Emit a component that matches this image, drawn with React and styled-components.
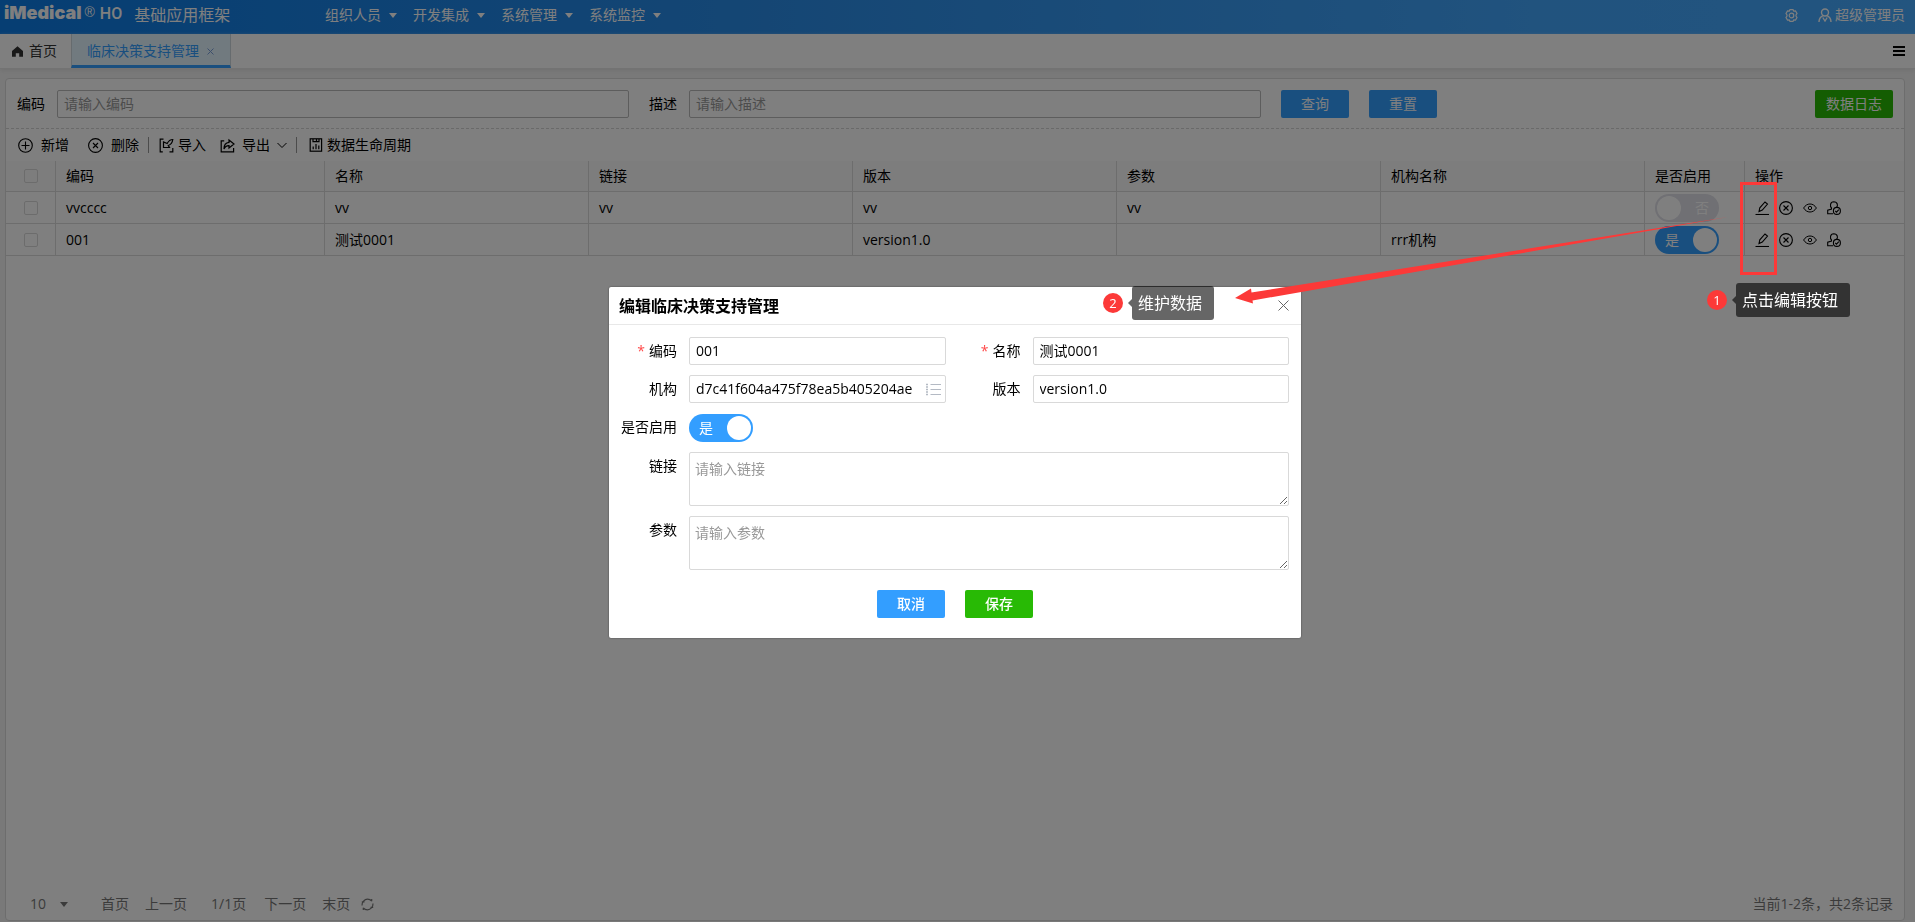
import React, { useState } from "react";
import styled, { createGlobalStyle, css } from "styled-components";

const blue = "#339eff";
const green = "#28ba05";
const line = "#dadada";
const red = "#fc3938";

const GlobalStyle = createGlobalStyle`
  *, *::before, *::after { box-sizing: border-box; }
  body { margin: 0; background: #f3f3f3; }
  body, button, input, textarea, select {
    font-family: "Open Sans", "Noto Sans CJK SC", sans-serif;
    font-size: 14px;
    line-height: 20px;
    color: #000;
  }
  button { border: 0; padding: 0; background: none; cursor: pointer; }
  a { color: inherit; text-decoration: none; }
  svg { display: block; flex: none; }
`;

const Page = styled.div`
  min-height: 100vh;
  display: flex;
  flex-direction: column;
`;

/* ---------- header ---------- */

const Header = styled.header`
  height: 34px;
  padding: 0 10px 4px 4px;
  display: flex;
  align-items: center;
  color: #fff;
  background: linear-gradient(90deg, #0c7ce6 0%, #2a8de9 40%, #42a6fd 80%, #46aaff 100%);
`;

const Brand = styled.div`
  width: 321px;
  display: flex;
  align-items: center;
`;

const LogoText = styled.span`
  font-family: Inter, sans-serif;
  font-size: 18px;
  font-weight: 900;
  line-height: 24px;
  margin-bottom: 4px;
`;

const LogoMark = styled.span`
  font-family: "Liberation Sans", sans-serif;
  font-size: 14px;
  line-height: 20px;
  margin: 0 5px 6px 3px;
`;

const LogoSuffix = styled.span`
  font-family: Roboto, sans-serif;
  font-size: 16px;
  font-weight: 500;
  margin: 0 12px 2px 0;
`;

const ProductName = styled.span`
  font-size: 16px;
  white-space: nowrap;
`;

const Nav = styled.nav`
  flex: 1;
  display: flex;
  gap: 16px;
`;

const NavItem = styled.button`
  display: flex;
  align-items: center;
  gap: 8px;
  color: #fff;
  white-space: nowrap;
`;

const Caret = styled.span`
  border: 4px solid transparent;
  border-top: 5px solid currentColor;
  border-bottom: 0;
`;

const HeaderTool = styled.button`
  display: flex;
  align-items: center;
  gap: 3px;
  margin-left: 20px;
  color: #fff;
`;

/* ---------- tab strip ---------- */

const TabStrip = styled.div`
  height: 35px;
  display: flex;
  background: #fff;
  border-bottom: 1px solid #e6e6e6;
  box-shadow: 0 2px 4px #e4e4e4;
`;

const HomeTab = styled.button`
  display: flex;
  align-items: center;
  gap: 6px;
  padding: 0 14px 0 12px;
  color: #333;
`;

const ActiveTab = styled.div`
  display: flex;
  align-items: center;
  gap: 8px;
  padding: 3px 16px 0 15px;
  color: ${blue};
  background: #e3f5ff;
  border: 1px solid #ccd6dc;
  border-width: 0 1px 3px;
  border-bottom-color: ${blue};
`;

const CloseButton = styled.button`
  color: ${(p) => p.$color};
`;

const MenuButton = styled.button`
  margin-left: auto;
  padding: 0 10px;
`;

/* ---------- panel ---------- */

const Panel = styled.main`
  flex: 1;
  display: flex;
  flex-direction: column;
  margin: 9px 10px 1px 5px;
  background: #fff;
  border: 1px solid ${line};
  border-radius: 4px;
`;

const SearchForm = styled.form`
  display: flex;
  align-items: center;
  padding: 11px 11px 10px 11px;
  border-bottom: 1px dashed #d5d5d5;
`;

const SearchLabel = styled.label`
  margin-right: 12px;
  white-space: nowrap;
`;

const control = css`
  width: 100%;
  min-width: 0;
  padding: 0 6px 2px;
  background: #fff;
  border: 1px solid ${(p) => p.$edge || "#d9d9d9"};
  border-radius: 2px;
  outline: 0;
  &::placeholder { color: #999; opacity: 1; }
`;

const TextBox = styled.input`
  ${control}
  height: 28px;
  padding-right: ${(p) => (p.$icon ? 30 : 6)}px;
`;

const SearchBox = styled(TextBox)`
  flex: 0 1 572px;
  margin-right: 20px;
`;

const Button = styled.button`
  flex: none;
  width: ${(p) => (p.$wide ? 78 : 68)}px;
  height: 28px;
  border-radius: 2px;
  color: #fff;
  font-weight: ${(p) => (p.$strong ? 500 : 400)};
  background: ${(p) => (p.$green ? green : blue)};
`;

const SearchButtons = styled.div`
  flex: 1;
  display: flex;
  gap: 20px;
  button:last-child { margin-left: auto; }
`;

const Toolbar = styled.div`
  height: 32px;
  display: flex;
  align-items: center;
  padding-left: 12px;
`;

const ToolButton = styled.button`
  display: flex;
  align-items: center;
  gap: ${(p) => p.$gap}px;
  margin-left: ${(p) => p.$before || 0}px;
  white-space: nowrap;
`;

const Divider = styled.span`
  width: 1px;
  height: 16px;
  margin: 0 ${(p) => p.$after}px 0 9px;
  background: #999;
`;

/* ---------- table ---------- */

const Table = styled.table`
  width: 100%;
  table-layout: fixed;
  border-collapse: separate;
  border-spacing: 0;
  th, td {
    height: 32px;
    padding: 0 10px;
    text-align: left;
    font-weight: 400;
    border-bottom: 1px solid ${line};
    border-right: 1px solid ${line};
    overflow: hidden;
    white-space: nowrap;
  }
  th { height: 31px; background: #fafafa; }
  th:last-child, td:last-child { border-right: 0; }
`;

const Col = styled.col`
  width: ${(p) => p.$width}px;
`;

const Tick = styled.input`
  appearance: none;
  display: block;
  width: 14px;
  height: 14px;
  margin: 0 auto;
  border: 1px solid #d9d9d9;
  border-radius: 2px;
  &:checked { background: ${blue}; border-color: ${blue}; }
`;

const SwitchLabel = styled.label`
  display: flex;
  align-items: center;
  justify-content: space-between;
  flex-direction: ${(p) => (p.$on ? "row" : "row-reverse")};
  width: 64px;
  height: 28px;
  padding: ${(p) => (p.$on ? "0 2px 0 10px" : "0 10px 0 2px")};
  border-radius: 14px;
  color: #fff;
  background: ${(p) => (p.$on ? blue : "#e0e0e8")};
  input { appearance: none; width: 0; height: 0; margin: 0; position: absolute; }
`;

const Knob = styled.span`
  width: 24px;
  height: 24px;
  border-radius: 50%;
  background: #fff;
`;

const Actions = styled.div`
  display: flex;
  gap: 10px;
`;

const Pager = styled.footer`
  margin-top: auto;
  display: flex;
  align-items: center;
  height: 32px;
  padding: 0 11px 0 24px;
  color: #777;
`;

const PageSize = styled.div`
  display: flex;
  align-items: center;
  gap: 14px;
  margin-right: 33px;
  select {
    appearance: none;
    border: 0;
    padding: 0;
    width: 16px;
    background: none;
    color: inherit;
  }
`;

const PageLink = styled.a`
  margin-right: ${(p) => p.$after || 16}px;
  color: #777;
`;

const Summary = styled.span`
  margin-left: auto;
`;

/* ---------- dialog ---------- */

const Mask = styled.div`
  position: fixed;
  inset: 0;
  display: flex;
  align-items: center;
  justify-content: center;
  padding: 3px 5px 0 0;
  background: rgba(0, 0, 0, 0.5);
`;

const Dialog = styled.section`
  position: relative;
  width: 692px;
  background: #fff;
  border-radius: 2px;
  box-shadow: 0 0 2px rgba(0, 0, 0, 0.5);
`;

const DialogHead = styled.div`
  display: flex;
  align-items: center;
  justify-content: space-between;
  height: 38px;
  padding: 0 12px 0 10px;
  border-bottom: 1px solid #e8e8e8;
`;

const DialogTitle = styled.h2`
  margin: 0;
  font-size: 16px;
  font-weight: 600;
`;

const Form = styled.form`
  display: grid;
  grid-template-columns: 68px 1fr 63px 1fr;
  column-gap: 12px;
  row-gap: 10px;
  padding: 12px 12px 20px 0;
`;

const FieldLabel = styled.label`
  text-align: right;
  line-height: 28px;
  height: 28px;
  white-space: nowrap;
`;

const Star = styled.span`
  margin-right: 4px;
  color: #ff4a4a;
`;

const Field = styled.div`
  position: relative;
  display: flex;
  grid-column: ${(p) => (p.$full ? "2 / -1" : "auto")};
`;

const SwitchField = styled(Field)`
  padding-top: 1px;
`;

const LookupButton = styled.button`
  position: absolute;
  right: 5px;
  top: 7px;
  color: #b4bac4;
`;

const TextArea = styled.textarea`
  ${control}
  height: 54px;
  padding: 6px 5px 0;
  resize: vertical;
`;

const FormButtons = styled.div`
  grid-column: 1 / -1;
  display: flex;
  justify-content: center;
  gap: 20px;
  padding: 10px 0 0 12px;
`;

/* ---------- guide marks over the page ---------- */

const Callout = styled.div`
  position: absolute;
  top: ${(p) => p.$top}px;
  right: ${(p) => p.$right}px;
  display: flex;
  align-items: center;
`;

const StepNumber = styled.span`
  width: 20px;
  height: 20px;
  margin-right: 4px;
  border-radius: 50%;
  text-align: center;
  font-size: 13px;
  color: #fff;
  background: ${red};
`;

const Bubble = styled.span`
  display: flex;
  align-items: center;
  height: 34px;
  padding: 0 12px 0 6px;
  border-radius: 3px;
  font-size: 16px;
  white-space: nowrap;
  color: #fff;
  background: ${(p) => p.$fill};
`;

const BubbleTip = styled.span`
  border: 4px solid transparent;
  border-right: 4px solid ${(p) => p.$fill};
  border-left: 0;
  margin-left: 1px;
`;

const Frame = styled.div`
  position: absolute;
  top: 182px;
  right: 138px;
  width: 37px;
  height: 93px;
  border: 3px solid ${red};
`;

const Pointer = styled.svg`
  position: absolute;
  left: 620px;
  top: -77px;
  pointer-events: none;
`;

/* ---------- icons ---------- */

const Icon = ({ size = 14, w = 1, children }) => (
  <svg width={size} height={size} viewBox={`0 0 ${size} ${size}`} fill="none" stroke="currentColor" strokeWidth={w} aria-hidden="true">
    {children}
  </svg>
);

const PlusIcon = () => (
  <Icon size={15} w={1.1}><circle cx="7.5" cy="7.5" r="6.8" /><path d="M7.5 3.5v8M3.5 7.5h8" /></Icon>
);
const CircleXIcon = ({ size = 14 }) => {
  const c = size / 2;
  return (
    <Icon size={size} w={1.1}>
      <circle cx={c} cy={c} r={c - 0.6} />
      <path d={`M${c - 2.5} ${c - 2.5}l5 5M${c + 2.5} ${c - 2.5}l-5 5`} />
    </Icon>
  );
};
const ImportIcon = () => (
  <Icon size={15} w={1.2}>
    <path d="M4.5 1.2H1.2v12.6h2.6M10.500 13.800h3.300V10" />
    <path d="M13.800 1.500C11.500 1.500 9.500 3 8.200 5.500L4.500 4v5.500h6L9.300 7.500c2.500-.8 4-2.500 4.500-6z" />
  </Icon>
);
const ExportIcon = () => (
  <Icon size={15} w={1.2}>
    <path d="M4.2 2.8H1.2v11h12.4V10" />
    <path d="M9 2l5 4-5 4V7.7C6.5 7.6 5 8.7 4 11c0-4 1.5-6.3 5-6.6z" />
  </Icon>
);
const LifeCycleIcon = () => (
  <Icon size={14} w={1.2}>
    <rect x="1.2" y="0.8" width="11.4" height="12.4" />
    <path d="M4 1v2.7h6V1M7.500 1v2.700M4.200 11.200V8.500M7 11.200V6M9.800 11.200V7.500" />
  </Icon>
);
const PencilIcon = () => (
  <Icon w={1.1}><path d="M4 10.500l.8-3.700L10 1l2.500 2L7.300 9zM4 10.500L7.300 9" /><path d="M.5 13.500h13.500" /></Icon>
);
const EyeIcon = () => (
  <Icon><path d="M.6 7C2.300 4.300 4.500 3 7 3s4.700 1.300 6.400 4C11.700 9.700 9.500 11 7 11S2.300 9.700.6 7z" /><circle cx="7" cy="7" r="1.7" /></Icon>
);
const UserCheckIcon = () => (
  <Icon w={1.1}>
    <path d="M6 12.800H.7V9.200L4.500 8V6.800C3 5.500 2.700 1 6.800.8c4 0 4.300 4 2.700 5.700" />
    <circle cx="9.9" cy="9.900" r="3.5" /><path d="M8.200 9.800l1.300 1.400 2.300-2.500" />
  </Icon>
);
const HomeIcon = () => (
  <Icon size={11}><path d="M5.5.3L11 5v5.700H7.200V7.200H3.800v3.500H0V5z" fill="currentColor" stroke="none" /></Icon>
);
const GearIcon = () => (
  <Icon size={13} w={1.2}>
    <path d="M5 .6h3l.7 1.500 1.800-.2 1.500 2.600-1 1.500v1l1 1.500-1.500 2.600-1.800-.2L8 12.400H5l-.7-1.500-1.800.2L1 8.500 2 7V6L1 4.500l1.500-2.600 1.800.2z" />
    <circle cx="6.5" cy="6.5" r="2.3" />
  </Icon>
);
const UserIcon = () => (
  <Icon size={14} w={1.4}>
    <circle cx="7" cy="4.5" r="3.5" /><path d="M1 14c0-3 1.500-5 4-6.300M13 14c0-3-1.500-5-4-6.300M4.800 9.500L7 13l2.200-3.500" />
  </Icon>
);
const RefreshIcon = () => (
  <Icon size={13} w={1.2}>
    <path d="M1 7.500C.8 4 3.500 1.200 6.500 1.200c1.800 0 3.200.7 4.200 2M12 5.500c.2 3.500-2.500 6.300-5.500 6.300-1.800 0-3.200-.7-4.200-2M.8 3.800h2.700M9.500 9.300h2.700M2.300 9.800v2.200M10.700 3.200V1" />
  </Icon>
);
const ChevronIcon = () => <Icon size={10}><path d="M.5 3L5 7.500 9.500 3" /></Icon>;
const CrossIcon = ({ size }) => <Icon size={size}><path d={`M.5 .5l${size - 1} ${size - 1}M${size - 0.5} .5l-${size - 1} ${size - 1}`} /></Icon>;
const MenuIcon = () => <Icon size={12} w={2}><path d="M0 2h12M0 6h12M0 10h12" /></Icon>;
const ListIcon = () => (
  <Icon size={15}><path d="M4.500 2.500H15M4.500 7.500H15M4.500 12.500H15" /><path d="M0 2.500h2M0 7.500h2M0 12.500h2M0 5h2M0 10h2" strokeWidth="1.5" /></Icon>
);

function Switch({ initial, id, label }) {
  const [on, setOn] = useState(initial);
  return (
    <SwitchLabel $on={on}>
      <input id={id} type="checkbox" role="switch" aria-label={label} checked={on} onChange={() => setOn(!on)} />
      <span>{on ? "是" : "否"}</span>
      <Knob />
    </SwitchLabel>
  );
}

const Step = ({ number, text, fill, top, right }) => (
  <Callout $top={top} $right={right}>
    <StepNumber>{number}</StepNumber>
    <BubbleTip $fill={fill} />
    <Bubble $fill={fill}>{text}</Bubble>
  </Callout>
);

const menus = ["组织人员", "开发集成", "系统管理", "系统监控"];
const columns = ["编码", "名称", "链接", "版本", "参数", "机构名称", "是否启用", "操作"];
const rows = [
  { cells: ["vvcccc", "vv", "vv", "vv", "vv", ""], on: false },
  { cells: ["001", "测试0001", "", "version1.0", "", "rrr机构"], on: true },
];

export default function App() {
  return (
    <>
      <GlobalStyle />
      <Page>
        <Header>
          <Brand>
            <LogoText>iMedical</LogoText>
            <LogoMark>®</LogoMark>
            <LogoSuffix>HO</LogoSuffix>
            <ProductName>基础应用框架</ProductName>
          </Brand>
          <Nav>
            {menus.map((m) => (
              <NavItem key={m}>{m}<Caret /></NavItem>
            ))}
          </Nav>
          <HeaderTool aria-label="设置"><GearIcon /></HeaderTool>
          <HeaderTool><UserIcon />超级管理员</HeaderTool>
        </Header>

        <TabStrip>
          <HomeTab><HomeIcon />首页</HomeTab>
          <ActiveTab>
            临床决策支持管理
            <CloseButton $color="#7a9fd8" aria-label="关闭标签"><CrossIcon size={7} /></CloseButton>
          </ActiveTab>
          <MenuButton aria-label="菜单"><MenuIcon /></MenuButton>
        </TabStrip>

        <Panel>
          <SearchForm onSubmit={(e) => e.preventDefault()}>
            <SearchLabel htmlFor="q-code">编码</SearchLabel>
            <SearchBox id="q-code" placeholder="请输入编码" $edge="#bbb" />
            <SearchLabel htmlFor="q-desc">描述</SearchLabel>
            <SearchBox id="q-desc" placeholder="请输入描述" $edge="#bbb" />
            <SearchButtons>
              <Button type="submit">查询</Button>
              <Button type="reset">重置</Button>
              <Button type="button" $green $wide>数据日志</Button>
            </SearchButtons>
          </SearchForm>

          <Toolbar>
            <ToolButton $gap={8}><PlusIcon />新增</ToolButton>
            <ToolButton $gap={8} $before={19}><CircleXIcon size={15} />删除</ToolButton>
            <Divider $after={10} />
            <ToolButton $gap={4}><ImportIcon />导入</ToolButton>
            <ToolButton $gap={7} $before={14}><ExportIcon />导出<ChevronIcon /></ToolButton>
            <Divider $after={12} />
            <ToolButton $gap={4}><LifeCycleIcon />数据生命周期</ToolButton>
          </Toolbar>

          <Table>
            <colgroup>
              <Col $width={50} />
              <Col $width={269} />
              <col span={5} />
              <Col $width={100} />
              <Col $width={159} />
            </colgroup>
            <thead>
              <tr>
                <th><Tick type="checkbox" aria-label="全选" /></th>
                {columns.map((c) => <th key={c}>{c}</th>)}
              </tr>
            </thead>
            <tbody>
              {rows.map((row) => (
                <tr key={row.cells[0]}>
                  <td><Tick type="checkbox" aria-label={row.cells[0]} /></td>
                  {row.cells.map((cell, i) => <td key={i}>{cell}</td>)}
                  <td><Switch initial={row.on} label="是否启用" /></td>
                  <td>
                    <Actions>
                      <button aria-label="编辑"><PencilIcon /></button>
                      <button aria-label="删除"><CircleXIcon /></button>
                      <button aria-label="查看"><EyeIcon /></button>
                      <button aria-label="授权"><UserCheckIcon /></button>
                    </Actions>
                  </td>
                </tr>
              ))}
            </tbody>
          </Table>

          <Pager>
            <PageSize>
              <select aria-label="每页条数" defaultValue="10"><option>10</option><option>20</option></select>
              <Caret />
            </PageSize>
            <PageLink href="#first">首页</PageLink>
            <PageLink href="#prev" $after={24}>上一页</PageLink>
            <PageLink as="span" $after={18}>1/1页</PageLink>
            <PageLink href="#next">下一页</PageLink>
            <PageLink href="#last" $after={11}>末页</PageLink>
            <PageLink as="button" aria-label="刷新"><RefreshIcon /></PageLink>
            <Summary>当前1-2条，共2条记录</Summary>
          </Pager>
        </Panel>
      </Page>

      <Mask>
        <Dialog role="dialog" aria-labelledby="dialog-title">
          <DialogHead>
            <DialogTitle id="dialog-title">编辑临床决策支持管理</DialogTitle>
            <CloseButton $color="#666" aria-label="关闭"><CrossIcon size={11} /></CloseButton>
          </DialogHead>
          <Form onSubmit={(e) => e.preventDefault()}>
            <FieldLabel htmlFor="f-code"><Star>*</Star>编码</FieldLabel>
            <Field><TextBox id="f-code" defaultValue="001" /></Field>
            <FieldLabel htmlFor="f-name"><Star>*</Star>名称</FieldLabel>
            <Field><TextBox id="f-name" defaultValue="测试0001" /></Field>

            <FieldLabel htmlFor="f-org">机构</FieldLabel>
            <Field>
              <TextBox id="f-org" $icon defaultValue="d7c41f604a475f78ea5b405204ae" />
              <LookupButton type="button" aria-label="选择机构"><ListIcon /></LookupButton>
            </Field>
            <FieldLabel htmlFor="f-version">版本</FieldLabel>
            <Field><TextBox id="f-version" defaultValue="version1.0" /></Field>

            <FieldLabel htmlFor="f-enabled">是否启用</FieldLabel>
            <SwitchField $full><Switch id="f-enabled" initial label="是否启用" /></SwitchField>

            <FieldLabel htmlFor="f-link">链接</FieldLabel>
            <Field $full><TextArea id="f-link" placeholder="请输入链接" /></Field>

            <FieldLabel htmlFor="f-param">参数</FieldLabel>
            <Field $full><TextArea id="f-param" placeholder="请输入参数" /></Field>

            <FormButtons>
              <Button type="button" $strong>取消</Button>
              <Button type="submit" $green $strong>保存</Button>
            </FormButtons>
          </Form>

          <Step number={2} text="维护数据" fill="rgba(0, 0, 0, 0.6)" top={-1} right={87} />
          <Pointer width="510" height="100" viewBox="0 0 510 100" aria-hidden="true">
            <path d="M6 88L22 78.500L22.500 82.500L499 7L23.500 90.500L24 93.500Z" fill={red} />
          </Pointer>
        </Dialog>

        <Frame />
        <Step number={1} text="点击编辑按钮" fill="#333" top={283} right={65} />
      </Mask>
    </>
  );
}
